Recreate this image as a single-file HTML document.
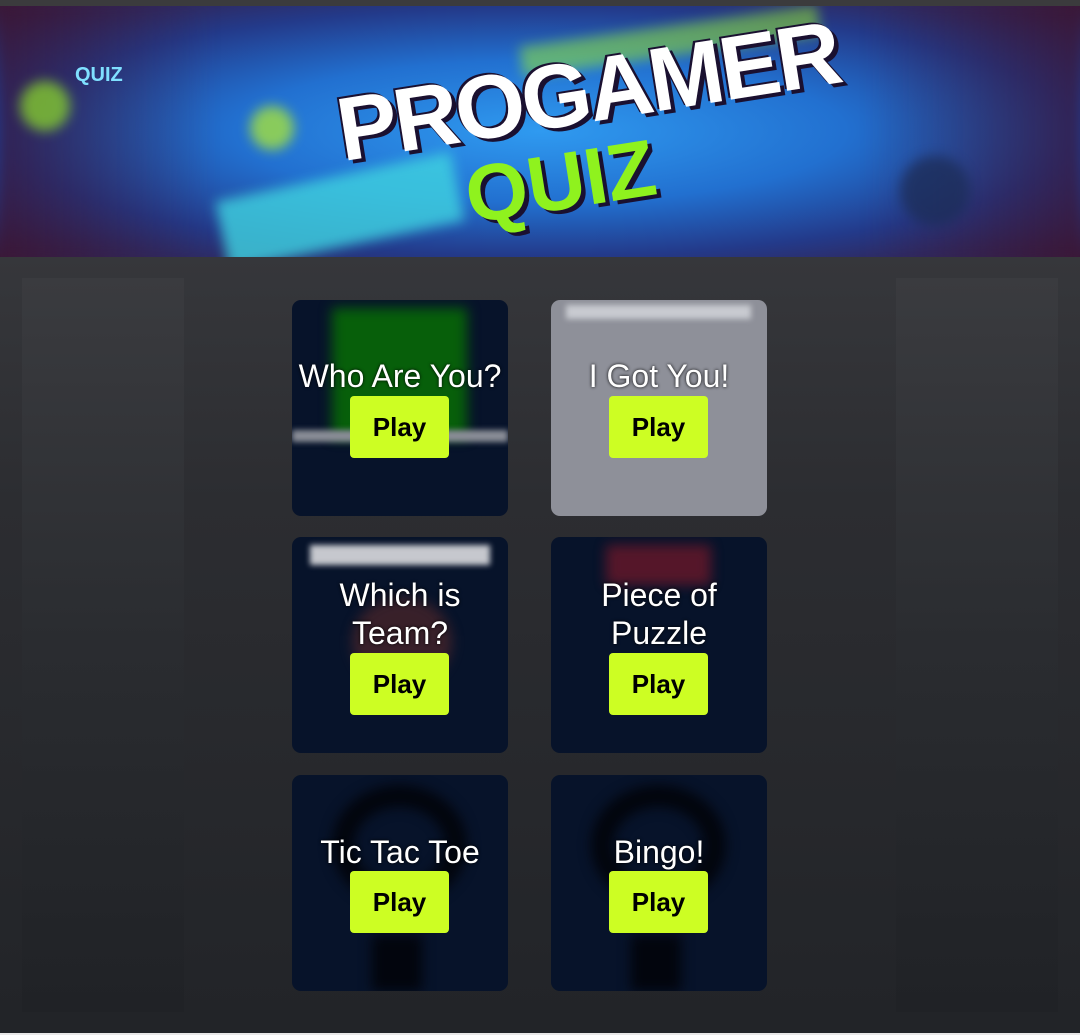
<!DOCTYPE html>
<html><head><meta charset="utf-8"><style>
*{margin:0;padding:0;box-sizing:border-box}
body{width:1080px;height:1035px;overflow:hidden;background:linear-gradient(#36373b 257px,#2c2d31 500px,#222428 1030px);font-family:"Liberation Sans",sans-serif;position:relative}
.banner{position:absolute;left:0;top:0;width:1080px;height:257px;border-top:6px solid #3b3b3d;overflow:hidden;
background:radial-gradient(ellipse at 50% 50%,#2f9af0 0%,#2270d0 40%,#233a8a 70%,#3a1a3a 100%)}
.side{position:absolute;top:278px;width:162px;height:734px;background:linear-gradient(#3a3b3f,#2a2c30 50%,#202226)}
.card{position:absolute;width:216px;height:216px;border-radius:9px;background:#07132a;overflow:hidden}
.card .t{position:absolute;left:-10px;right:-10px;text-align:center;color:#fff;font-size:32px;line-height:38px;text-shadow:0 0 3px #000}
.card .b{position:absolute;left:58px;width:99px;height:62px;background:#cdfe23;border-radius:4px;text-align:center;line-height:62px;font-weight:bold;font-size:26px;color:#000}
.blob{position:absolute;filter:blur(6px)}
</style></head><body>
<div class="banner">
<div class="blob" style="left:0;top:0;width:1080px;height:251px;background:linear-gradient(90deg,rgba(60,20,50,.6),transparent 20%,transparent 80%,rgba(60,20,50,.6))"></div>
<div class="blob" style="left:220px;top:170px;width:240px;height:70px;background:#3fd3e0;transform:rotate(-12deg);opacity:.8"></div>
<div class="blob" style="left:520px;top:20px;width:300px;height:30px;background:#9df22a;transform:rotate(-8deg);opacity:.5"></div>
<div class="blob" style="left:20px;top:75px;width:50px;height:50px;border-radius:50%;background:#8fe028;opacity:.7"></div>
<div class="blob" style="left:250px;top:100px;width:44px;height:44px;border-radius:50%;background:#b5f02a;opacity:.7"></div>
<div class="blob" style="left:900px;top:150px;width:70px;height:70px;border-radius:50%;background:#1d2e5a;opacity:.8"></div>
<div style="position:absolute;left:75px;top:58px;color:#7fe0ff;font-weight:bold;font-size:20px">QUIZ</div>
<div style="position:absolute;left:335px;top:35px;color:#fff;font-weight:900;font-size:90px;letter-spacing:-3px;transform:rotate(-9deg);text-shadow:4px 4px 0 #1a1030,-2px -2px 0 #1a1030">PROGAMER</div>
<div style="position:absolute;left:465px;top:130px;color:#8ff21e;font-weight:900;font-size:80px;transform:rotate(-9deg);text-shadow:4px 4px 0 #1a1030">QUIZ</div>
</div>
<div class="side" style="left:22px"></div>
<div class="side" style="left:896px"></div>

<div class="card" style="left:292px;top:300px">
<div class="blob" style="left:40px;top:8px;width:135px;height:130px;background:#075f0a"></div>
<div class="blob" style="left:0;top:130px;width:216px;height:12px;background:#8a8d96;filter:blur(3px)"></div>
<div class="t" style="top:57px">Who Are You?</div><div class="b" style="top:96px">Play</div></div>
<div class="card" style="left:551px;top:300px;background:#8e9099">
<div class="blob" style="left:15px;top:5px;width:185px;height:14px;background:#c8cad0;filter:blur(3px)"></div>
<div class="t" style="top:57px">I Got You!</div><div class="b" style="top:96px">Play</div></div>
<div class="card" style="left:292px;top:537px">
<div class="blob" style="left:18px;top:8px;width:180px;height:20px;background:#c6c8ce;filter:blur(3px)"></div>
<div class="blob" style="left:60px;top:60px;width:100px;height:90px;background:#5a2a2a;opacity:.6;border-radius:50%"></div>
<div class="t" style="top:39px">Which is<br>Team?</div><div class="b" style="top:116px">Play</div></div>
<div class="card" style="left:551px;top:537px">
<div class="blob" style="left:55px;top:8px;width:105px;height:40px;background:#8a1a2a;opacity:.6"></div>
<div class="t" style="top:39px">Piece of<br>Puzzle</div><div class="b" style="top:116px">Play</div></div>
<div class="card" style="left:292px;top:775px">
<div class="blob" style="left:40px;top:10px;width:135px;height:120px;border-radius:50%;border:22px solid #02050d"></div>
<div class="blob" style="left:80px;top:160px;width:50px;height:56px;background:#02050d"></div>
<div class="t" style="top:58px">Tic Tac Toe</div><div class="b" style="top:96px">Play</div></div>
<div class="card" style="left:551px;top:775px">
<div class="blob" style="left:40px;top:10px;width:135px;height:120px;border-radius:50%;border:22px solid #02050d"></div>
<div class="blob" style="left:80px;top:160px;width:50px;height:56px;background:#02050d"></div>
<div class="t" style="top:58px">Bingo!</div><div class="b" style="top:96px">Play</div></div>
<div style="position:absolute;left:0;top:1033px;width:1080px;height:2px;background:#e8e8e8"></div>
</body></html>
